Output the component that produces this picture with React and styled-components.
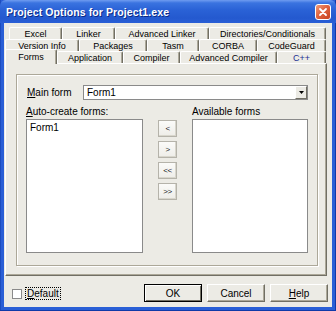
import React from "react";
import styled, { createGlobalStyle } from "styled-components";

const Global = createGlobalStyle`
  html, body { margin: 0; padding: 0; background: #fff; }
  body { font-family: "Liberation Sans", Arial, sans-serif; }
`;

const Window = styled.div`
  box-sizing: border-box;
  width: 336px;
  height: 311px;
  display: flex;
  flex-direction: column;
  background: linear-gradient(90deg, #0f3aa8 0px, #2a5fd6 1px, #2a5fd6 335px, #0f3aa8 335px);
  border-bottom: 1px solid #0f3aa8;
`;

const TitleBar = styled.div`
  height: 23px;
  flex: none;
  display: flex;
  align-items: center;
  justify-content: space-between;
  padding: 0 5px 0 6px;
  background: linear-gradient(180deg, #6f9cf0 0px, #3a73e0 3px, #2a62d6 10px, #2459cf 18px, #2a5fd6 23px);
  border-radius: 6px 6px 0 0;
`;

const Title = styled.span`
  color: #fff;
  font-weight: bold;
  font-size: 10.5px;
  letter-spacing: 0.1px;
  text-shadow: 1px 1px 0 #0b2a86;
`;

const CloseBtn = styled.div`
  box-sizing: border-box;
  width: 16px;
  height: 16px;
  border: 1px solid #fff;
  border-radius: 3px;
  background: linear-gradient(135deg, #f09a78 0%, #e06440 45%, #c8401c 100%);
  display: flex;
  align-items: center;
  justify-content: center;
`;

const Client = styled.div`
  flex: 1;
  margin: 0 4px 3px 4px;
  background: #ecebe5;
  display: flex;
  flex-direction: column;
  color: #000;
  font-size: 10px;
`;

const TabArea = styled.div`
  padding-top: 4px;
  display: flex;
  flex-direction: column;
`;

const TabRow = styled.div`
  display: flex;
  margin-left: ${(p) => p.$indent}px;
  height: 12px;
`;

const Tab = styled.div`
  box-sizing: border-box;
  flex: none;
  width: ${(p) => p.$w}px;
  height: ${(p) => (p.$active ? 15 : 12)}px;
  margin-top: ${(p) => (p.$active ? -2 : 0)}px;
  position: ${(p) => (p.$active ? "relative" : "static")};
  z-index: ${(p) => (p.$active ? 2 : 0)};
  background: #ecebe5;
  border-top: 1px solid #fff;
  border-left: 1px solid #fff;
  border-right: 1px solid #716f64;
  box-shadow: inset -1px 0 0 #aca899;
  border-radius: 2px 2px 0 0;
  font-size: 9px;
  line-height: 10px;
  text-align: center;
  white-space: nowrap;
  overflow: hidden;
  padding-top: ${(p) => (p.$active ? 2 : 1)}px;
  color: ${(p) => (p.$hot ? "#1b2f92" : "#000")};
`;

const Panel = styled.div`
  box-sizing: border-box;
  width: 322px;
  height: 213px;
  margin-left: 1px;
  border-top: 1px solid #fff;
  border-left: 1px solid #fff;
  border-right: 1px solid #716f64;
  border-bottom: 1px solid #716f64;
  box-shadow: inset -1px -1px 0 #aca899;
  padding: 10px 8px 9px 10px;
  display: flex;
`;

const Group = styled.div`
  box-sizing: border-box;
  width: 302px;
  height: 192px;
  border: 1px solid #aca899;
  box-shadow: inset 1px 1px 0 #fff, 1px 1px 0 #fff;
  padding: 10px 9px 12px 9px;
  display: flex;
  flex-direction: column;
`;

const MainRow = styled.div`
  display: flex;
  align-items: center;
  height: 15px;
`;

const Label = styled.span`
  font-size: 10px;
  line-height: 12px;
  white-space: nowrap;
`;

const MainLabel = styled(Label)`
  width: 56px;
  padding-left: 1px;
`;

const Combo = styled.div`
  box-sizing: border-box;
  flex: 1;
  height: 15px;
  background: #fff;
  border: 1px solid #8a8a8a;
  display: flex;
  align-items: center;
  justify-content: space-between;
  padding-left: 3px;
  font-size: 10px;
`;

const DropBtn = styled.div`
  box-sizing: border-box;
  width: 12px;
  height: 13px;
  background: #ecebe5;
  border-top: 1px solid #fff;
  border-left: 1px solid #fff;
  border-right: 1px solid #716f64;
  border-bottom: 1px solid #716f64;
  display: flex;
  align-items: center;
  justify-content: center;
`;

const ListsGrid = styled.div`
  flex: 1;
  display: grid;
  grid-template-columns: 117px 49px 116px;
  grid-template-rows: 13px 1fr;
  margin-top: 6px;
`;

const ListBox = styled.div`
  box-sizing: border-box;
  background: #fff;
  border: 1px solid #8a8a8a;
  padding: 2px 3px;
  font-size: 10px;
  line-height: 12px;
  grid-row: 2;
`;

const MoveCol = styled.div`
  grid-row: 2;
  grid-column: 2;
  display: flex;
  flex-direction: column;
  align-items: center;
  gap: 4px;
  padding-top: 1px;
`;

const SmallBtn = styled.div`
  box-sizing: border-box;
  width: 19px;
  height: 17px;
  background: linear-gradient(180deg, #fbfbf9, #eeede8);
  border: 1px solid #b5b3aa;
  box-shadow: inset -1px -1px 0 #d8d6cc;
  font-size: 8px;
  display: flex;
  align-items: center;
  justify-content: center;
  letter-spacing: -0.5px;
  color: #222;
`;

const Footer = styled.div`
  flex: 1;
  display: flex;
  align-items: flex-start;
  padding: 8px 4px 0 8px;
`;

const CheckWrap = styled.div`
  display: flex;
  align-items: center;
  gap: 4px;
  margin-top: 4px;
  flex: 1;
`;

const CheckBox = styled.div`
  box-sizing: border-box;
  width: 10px;
  height: 10px;
  background: #fff;
  border: 1px solid #8a8a8a;
`;

const FocusLabel = styled.span`
  font-size: 10px;
  line-height: 11px;
  outline: 1px dotted #000;
  padding: 0 1px;
`;

const Buttons = styled.div`
  display: flex;
  gap: 5px;
`;

const DlgBtn = styled.div`
  box-sizing: border-box;
  width: 58px;
  height: 18px;
  background: #ecebe5;
  border-top: 1px solid ${(p) => (p.$default ? "#000" : "#fff")};
  border-left: 1px solid ${(p) => (p.$default ? "#000" : "#fff")};
  border-right: 1px solid ${(p) => (p.$default ? "#000" : "#716f64")};
  border-bottom: 1px solid ${(p) => (p.$default ? "#000" : "#716f64")};
  box-shadow: ${(p) =>
    p.$default
      ? "inset 1px 1px 0 #fff, inset -1px -1px 0 #716f64"
      : "inset -1px -1px 0 #aca899"};
  display: flex;
  align-items: center;
  justify-content: center;
  font-size: 10px;
`;

const rows = [
  {
    indent: 5,
    tabs: [
      ["Excel", 53],
      ["Linker", 53],
      ["Advanced Linker", 94],
      ["Directories/Conditionals", 117],
    ],
  },
  {
    indent: 1,
    tabs: [
      ["Version Info", 74],
      ["Packages", 68],
      ["Tasm", 52],
      ["CORBA", 58],
      ["CodeGuard", 69],
    ],
  },
  {
    indent: 1,
    tabs: [
      ["Forms", 52, "active"],
      ["Application", 66],
      ["Compiler", 57],
      ["Advanced Compiler", 97],
      ["C++", 49, "hot"],
    ],
  },
];

export default function App() {
  return (
    <>
      <Global />
      <Window>
        <TitleBar>
          <Title>Project Options for Project1.exe</Title>
          <CloseBtn>
            <svg width="10" height="10" viewBox="0 0 10 10">
              <path d="M2 2 L8 8 M8 2 L2 8" stroke="#fff" strokeWidth="1.8" strokeLinecap="round" />
            </svg>
          </CloseBtn>
        </TitleBar>
        <Client>
          <TabArea>
            {rows.map((r, i) => (
              <TabRow key={i} $indent={r.indent}>
                {r.tabs.map(([t, w, s]) => (
                  <Tab key={t} $w={w} $active={s === "active"} $hot={s === "hot"}>
                    {t}
                  </Tab>
                ))}
              </TabRow>
            ))}
          </TabArea>
          <Panel>
            <Group>
              <MainRow>
                <MainLabel>
                  <u>M</u>ain form
                </MainLabel>
                <Combo>
                  <span>Form1</span>
                  <DropBtn>
                    <svg width="5" height="3" viewBox="0 0 5 3">
                      <path d="M0 0 H5 L2.5 3 Z" fill="#000" />
                    </svg>
                  </DropBtn>
                </Combo>
              </MainRow>
              <ListsGrid>
                <Label style={{ gridColumn: 1, gridRow: 1 }}>
                  <u>A</u>uto-create forms:
                </Label>
                <Label style={{ gridColumn: 3, gridRow: 1 }}>Available forms</Label>
                <ListBox style={{ gridColumn: 1 }}>Form1</ListBox>
                <MoveCol>
                  <SmallBtn>&lt;</SmallBtn>
                  <SmallBtn>&gt;</SmallBtn>
                  <SmallBtn>&lt;&lt;</SmallBtn>
                  <SmallBtn>&gt;&gt;</SmallBtn>
                </MoveCol>
                <ListBox style={{ gridColumn: 3 }} />
              </ListsGrid>
            </Group>
          </Panel>
          <Footer>
            <CheckWrap>
              <CheckBox />
              <FocusLabel>
                <u>D</u>efault
              </FocusLabel>
            </CheckWrap>
            <Buttons>
              <DlgBtn $default>OK</DlgBtn>
              <DlgBtn>Cancel</DlgBtn>
              <DlgBtn>
                <span>
                  <u>H</u>elp
                </span>
              </DlgBtn>
            </Buttons>
          </Footer>
        </Client>
      </Window>
    </>
  );
}
